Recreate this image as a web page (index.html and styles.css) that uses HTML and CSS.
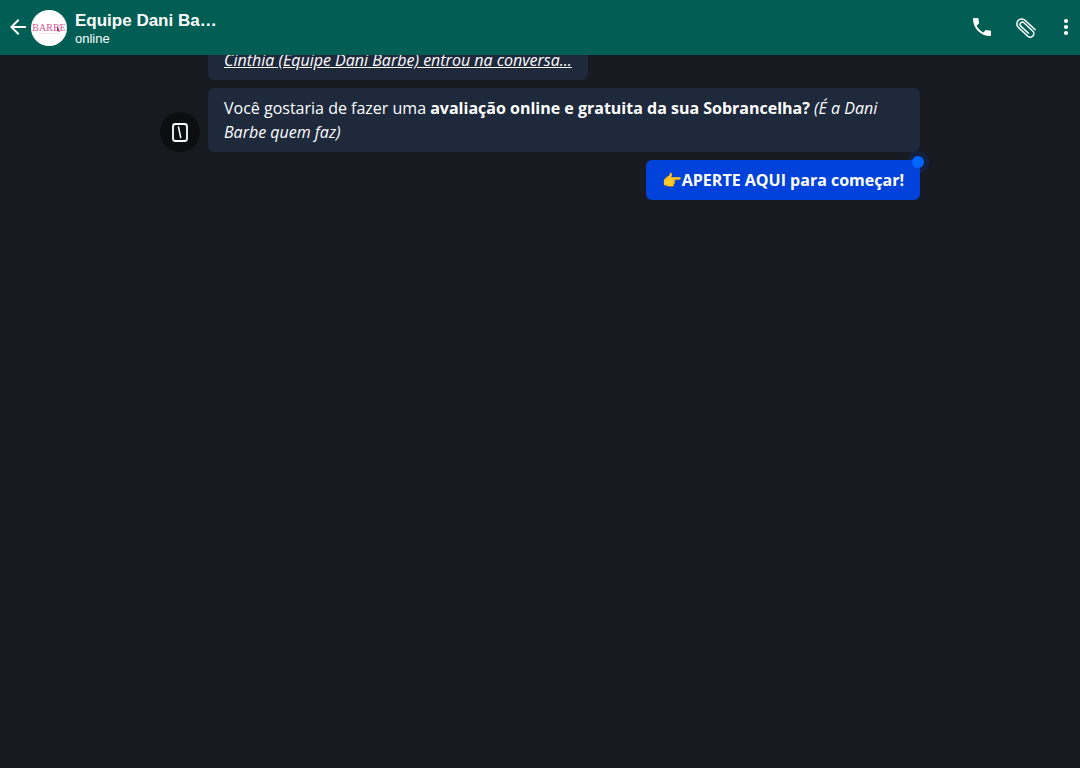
FILE: index.html
```html
<!DOCTYPE html>
<html lang="pt-BR">
<head>
<meta charset="utf-8">
<meta name="viewport" content="width=device-width, initial-scale=1">
<title>Equipe Dani Barbe</title>
<link rel="stylesheet" href="styles.css">
</head>
<body>
<header class="topbar">
  <button class="icon-button back" type="button" aria-label="Voltar">
    <svg width="24" height="24" viewBox="0 0 24 24" fill="currentColor"><path d="M20 11H7.83l5.59-5.59L12 4l-8 8 8 8 1.41-1.41L7.83 13H20v-2z"/></svg>
  </button>
  <svg class="avatar" width="36" height="36" viewBox="0 0 36 36" role="img" aria-label="Barbe">
    <circle cx="18" cy="18" r="18" fill="#fff"/>
    <text class="logo-text" x="18" y="21" text-anchor="middle">BARBE</text>
    <path d="M26 16l3 6-3-1z" fill="#8f3f72"/>
    <path d="M8 23.500h20" stroke="#fbe3ec" stroke-width="1"/>
  </svg>
  <div class="contact">
    <h1 class="name">Equipe Dani Barbe</h1>
    <p class="status">online</p>
  </div>
  <nav class="actions" aria-label="Ações">
    <button class="icon-button" type="button" aria-label="Ligar">
      <svg width="24" height="24" viewBox="0 0 24 24" fill="currentColor"><path d="M6.620 10.790c1.440 2.830 3.760 5.140 6.590 6.590l2.200-2.200c.27-.27.67-.36 1.020-.24 1.120.37 2.330.57 3.570.57.55 0 1 .45 1 1V20c0 .55-.45 1-1 1-9.390 0-17-7.610-17-17 0-.55.45-1 1-1h3.500c.55 0 1 .45 1 1 0 1.250.2 2.450.57 3.570.11.35.03.74-.25 1.020l-2.200 2.200z"/></svg>
    </button>
    <button class="icon-button" type="button" aria-label="Anexar">
      <svg width="24" height="24" viewBox="0 0 24 24" fill="none" stroke="currentColor" stroke-width="1.500" stroke-linecap="round"><g transform="translate(12.300 13.300) rotate(43)"><path d="M7.500-5H-6.300a4.900 4.900 0 0 0 0 9.800H6.500a3.600 3.600 0 0 0 0-7.200H-5.500a2.300 2.300 0 0 0 0 4.600H5"/></g></svg>
    </button>
    <button class="icon-button more" type="button" aria-label="Mais opções">
      <svg width="24" height="24" viewBox="0 0 24 24" fill="currentColor"><circle cx="12" cy="6" r="2.100"/><circle cx="12" cy="12" r="2.100"/><circle cx="12" cy="18" r="2.100"/></svg>
    </button>
  </nav>
</header>
<main class="chat">
  <div class="host">
    <svg class="host-avatar" width="40" height="40" viewBox="0 0 40 40" role="img" aria-label="Atendente">
      <circle cx="20" cy="20" r="20" fill="#0c0e11"/>
      <rect x="13" y="12" width="14" height="17" rx="2.500" fill="none" stroke="#fff" stroke-width="1.800"/>
      <path d="M18.500 15l2.200 10.500" stroke="#fff" stroke-width="1.500" stroke-linecap="round"/>
    </svg>
    <div class="messages">
      <p class="bubble"><u><i>Cinthia (Equipe Dani Barbe) entrou na conversa...</i></u></p>
      <p class="bubble">Você gostaria de fazer uma <b>avaliação online e gratuita da sua Sobrancelha?</b> <i>(É a Dani Barbe quem faz)</i></p>
    </div>
  </div>
  <button class="reply" type="button">👉APERTE AQUI para começar!<span class="ping"></span></button>
</main>
</body>
</html>
```
FILE: styles.css
```css
* {
  box-sizing: border-box;
}

body {
  margin: 0;
  min-height: 100vh;
  background: #171a21;
  color: #fff;
  font: 16px/24px "Open Sans", sans-serif;
}

.topbar {
  position: fixed;
  top: 0;
  left: 0;
  right: 0;
  z-index: 1;
  display: flex;
  align-items: center;
  height: 55px;
  padding-left: 6px;
  background: #005e54;
  font-family: "Liberation Sans", Arial, sans-serif;
}

.icon-button {
  display: flex;
  padding: 0 0 1px;
  border: 0;
  background: none;
  color: #fff;
  cursor: pointer;
}

.back {
  margin-right: 1px;
}

.avatar {
  margin-right: 8px;
}

.logo-text {
  font: 10px "Liberation Serif", serif;
  fill: #e0558f;
}

.contact {
  width: 146px;
  padding-top: 2px;
}

.name {
  margin: 0;
  overflow: hidden;
  font-size: 17px;
  line-height: 20px;
  text-overflow: ellipsis;
  white-space: nowrap;
}

.status {
  margin: 0;
  font-size: 13px;
  line-height: 16px;
}

.actions {
  display: flex;
  gap: 20px;
  margin-left: auto;
}

.more {
  margin: 0 2px 0 -4px;
}

.chat {
  display: flex;
  flex-direction: column;
  gap: 8px;
  max-width: 760px;
  margin: 0 auto;
  padding-top: 40px;
}

.host {
  display: flex;
  align-items: flex-end;
  gap: 8px;
}

.host-avatar {
  flex: none;
}

.messages {
  display: flex;
  flex: 1;
  flex-direction: column;
  align-items: flex-start;
  gap: 8px;
}

.bubble {
  margin: 0;
  padding: 8px 16px;
  border-radius: 6px;
  background: #1e293b;
}

.reply {
  position: relative;
  align-self: flex-end;
  padding: 8px 16px;
  border: 0;
  border-radius: 6px;
  background: #0042da;
  color: #fff;
  font: bold 16px/24px "Open Sans", sans-serif;
  cursor: pointer;
}

.ping {
  position: absolute;
  top: -4px;
  right: -4px;
  width: 12px;
  height: 12px;
  border-radius: 50%;
  background: #0066ff;
  box-shadow: 0 0 0 5px rgba(0, 66, 218, 0.16);
}
```
